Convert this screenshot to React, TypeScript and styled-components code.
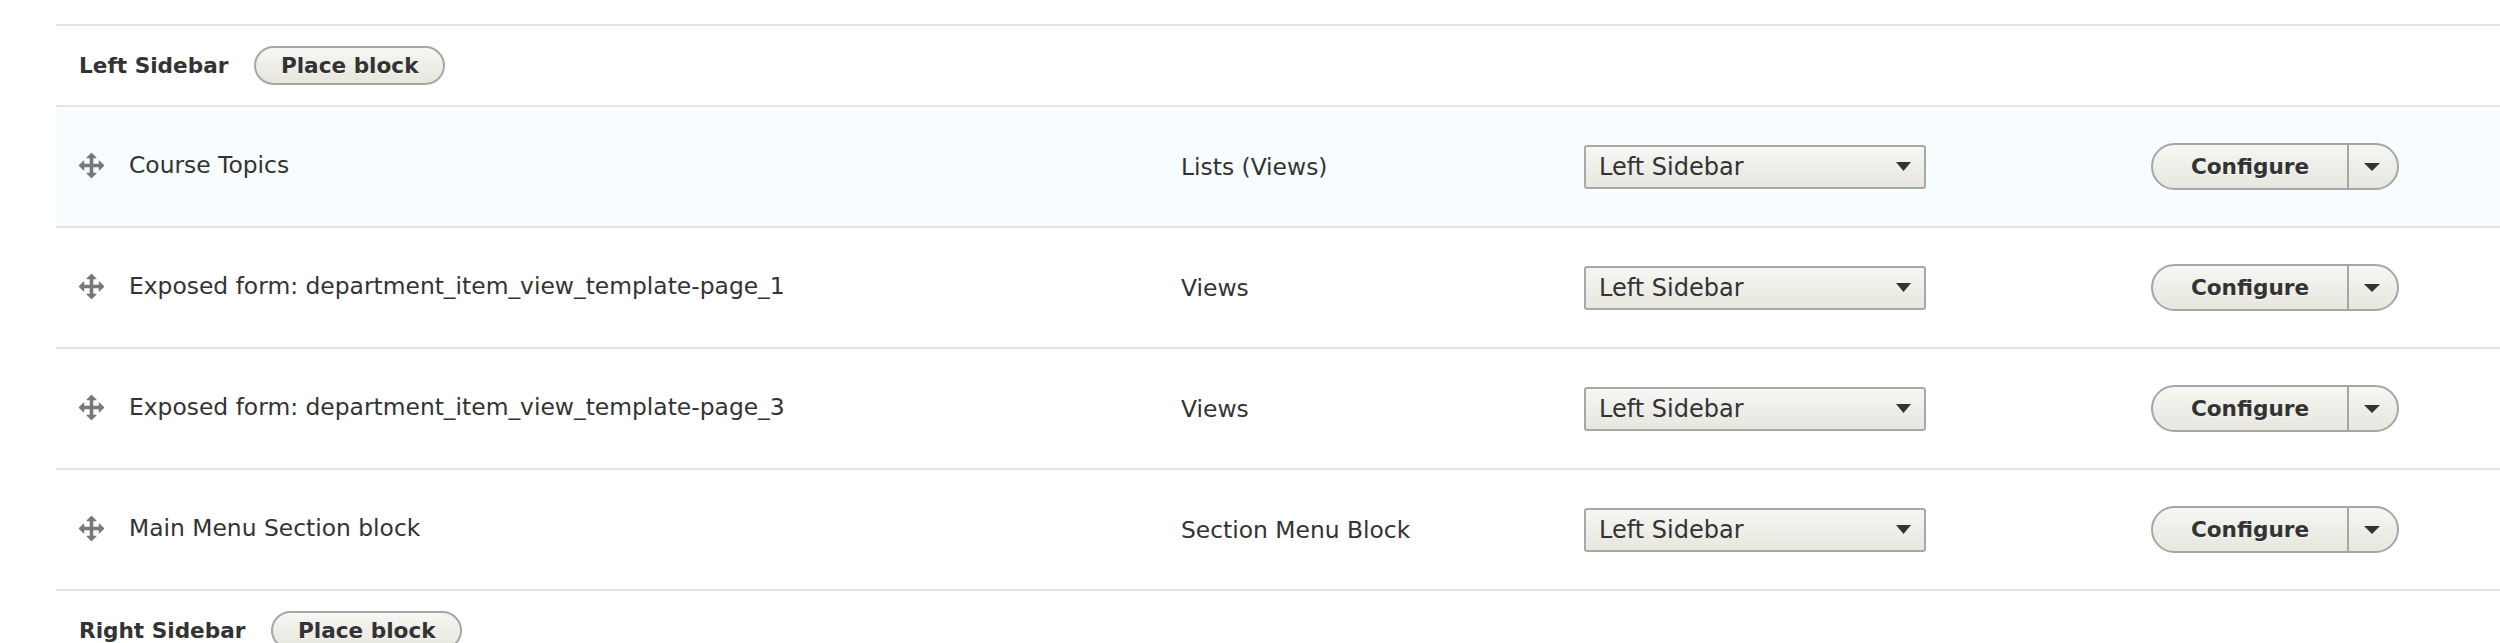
import React from 'react';
import styled, { createGlobalStyle } from 'styled-components';

const Global = createGlobalStyle`
  html, body { margin: 0; padding: 0; background: #ffffff; }
  body {
    font-family: "DejaVu Sans", "Lucida Grande", "Lucida Sans Unicode", sans-serif;
    color: #333333;
  }
`;

const Page = styled.div`
  padding-top: 24px;
  padding-left: 56px;
`;

const Table = styled.div`
  border-top: 2px solid #e6e4df;
`;

const RegionRow = styled.div`
  display: flex;
  align-items: center;
  gap: 26px;
  height: 79px;
  padding-left: 23px;
  border-bottom: 2px solid #e6e4df;
`;

const RegionTitle = styled.span`
  font-weight: bold;
  font-size: 21.6px;
  color: #333333;
`;

const PillButton = styled.button`
  box-sizing: border-box;
  height: 39px;
  padding: 0 24.5px;
  display: inline-flex;
  align-items: center;
  border: 2px solid #a6a6a6;
  border-radius: 20em;
  background: linear-gradient(to bottom, #f6f6f3, #e7e7df);
  font-family: inherit;
  font-weight: bold;
  font-size: 21.6px;
  color: #333333;
  text-shadow: 0 1px rgba(255, 255, 255, 0.6);
  cursor: pointer;
`;

const BlockRow = styled.div<{ $hover?: boolean }>`
  display: grid;
  grid-template-columns: 1102px 403px 567px 1fr;
  align-items: center;
  height: 119px;
  padding-left: 21px;
  border-bottom: 2px solid #e6e4df;
  background: ${(p) => (p.$hover ? '#f7fcff' : '#ffffff')};
`;

const NameCell = styled.div`
  display: flex;
  align-items: center;
  gap: 23px;
  font-size: 23.4px;
  margin-top: -3px;
`;

const Handle = styled.svg`
  width: 29px;
  height: 29px;
  flex: none;
`;

const CategoryCell = styled.div`
  font-size: 23.4px;
  margin-left: 2px;
`;

const Select = styled.div`
  box-sizing: border-box;
  width: 342px;
  height: 44px;
  margin-left: 2px;
  display: flex;
  align-items: center;
  justify-content: space-between;
  padding: 0 13px 0 13px;
  border: 2px solid #a8a8a8;
  border-radius: 3px;
  background: linear-gradient(to bottom, #f6f6f3, #e7e7df);
  font-size: 24px;
  color: #333333;
`;

const Arrow = styled.svg<{ $w: number; $h: number }>`
  width: ${(p) => p.$w}px;
  height: ${(p) => p.$h}px;
  flex: none;
`;

const DropButton = styled.div`
  box-sizing: border-box;
  display: inline-flex;
  height: 47px;
  margin-left: 2px;
  border: 2px solid #a6a6a6;
  border-radius: 20em;
  background: linear-gradient(to bottom, #f6f6f3, #e7e7df);
  overflow: hidden;
`;

const DropMain = styled.span`
  display: flex;
  align-items: center;
  justify-content: center;
  width: 194px;
  font-weight: bold;
  font-size: 21.6px;
  color: #333333;
  text-shadow: 0 1px rgba(255, 255, 255, 0.6);
`;

const DropToggle = styled.span`
  display: flex;
  align-items: center;
  justify-content: center;
  width: 46px;
  border-left: 2px solid #a6a6a6;
  padding-right: 2px;
`;

const MOVE =
  'M14.904 7.753l-2.373-2.372c-.291-.292-.529-.193-.529.22v1.399h-3v-3h1.398c.414 0 .512-.239.221-.53l-2.371-2.372c-.137-.136-.36-.136-.497 0l-2.372 2.372c-.292.292-.193.53.22.53h1.399v3h-3v-1.4c0-.413-.239-.511-.53-.22l-2.372 2.372c-.136.136-.136.36 0 .497l2.372 2.372c.291.292.53.192.53-.22v-1.4h3v3h-1.4c-.413 0-.511.238-.22.529l2.374 2.373c.137.137.36.137.495 0l2.373-2.373c.29-.291.19-.529-.222-.529h-1.398v-3h3v1.4c0 .412.238.511.529.219l2.373-2.371c.137-.137.137-.359 0-.495z';

type Block = { name: string; category: string; hover?: boolean };

const blocks: Block[] = [
  { name: 'Course Topics', category: 'Lists (Views)', hover: true },
  { name: 'Exposed form: department_item_view_template-page_1', category: 'Views' },
  { name: 'Exposed form: department_item_view_template-page_3', category: 'Views' },
  { name: 'Main Menu Section block', category: 'Section Menu Block' },
];

const Triangle: React.FC<{ w: number; h: number }> = ({ w, h }) => (
  <Arrow $w={w} $h={h} viewBox="0 0 15 9" preserveAspectRatio="none">
    <path d="M0 0h15L7.5 9z" fill="#333333" />
  </Arrow>
);

const Row: React.FC<{ block: Block }> = ({ block }) => (
  <BlockRow $hover={block.hover}>
    <NameCell>
      <Handle viewBox="0 0 16 16">
        <path d={MOVE} fill="#787878" />
      </Handle>
      <span>{block.name}</span>
    </NameCell>
    <CategoryCell>{block.category}</CategoryCell>
    <div>
      <Select>
        <span>Left Sidebar</span>
        <Triangle w={15} h={9} />
      </Select>
    </div>
    <div>
      <DropButton>
        <DropMain>Configure</DropMain>
        <DropToggle>
          <Triangle w={16} h={8} />
        </DropToggle>
      </DropButton>
    </div>
  </BlockRow>
);

export default function App() {
  return (
    <>
      <Global />
      <Page>
        <Table>
          <RegionRow>
            <RegionTitle>Left Sidebar</RegionTitle>
            <PillButton>Place block</PillButton>
          </RegionRow>
          {blocks.map((b) => (
            <Row key={b.name} block={b} />
          ))}
          <RegionRow>
            <RegionTitle>Right Sidebar</RegionTitle>
            <PillButton>Place block</PillButton>
          </RegionRow>
        </Table>
      </Page>
    </>
  );
}
